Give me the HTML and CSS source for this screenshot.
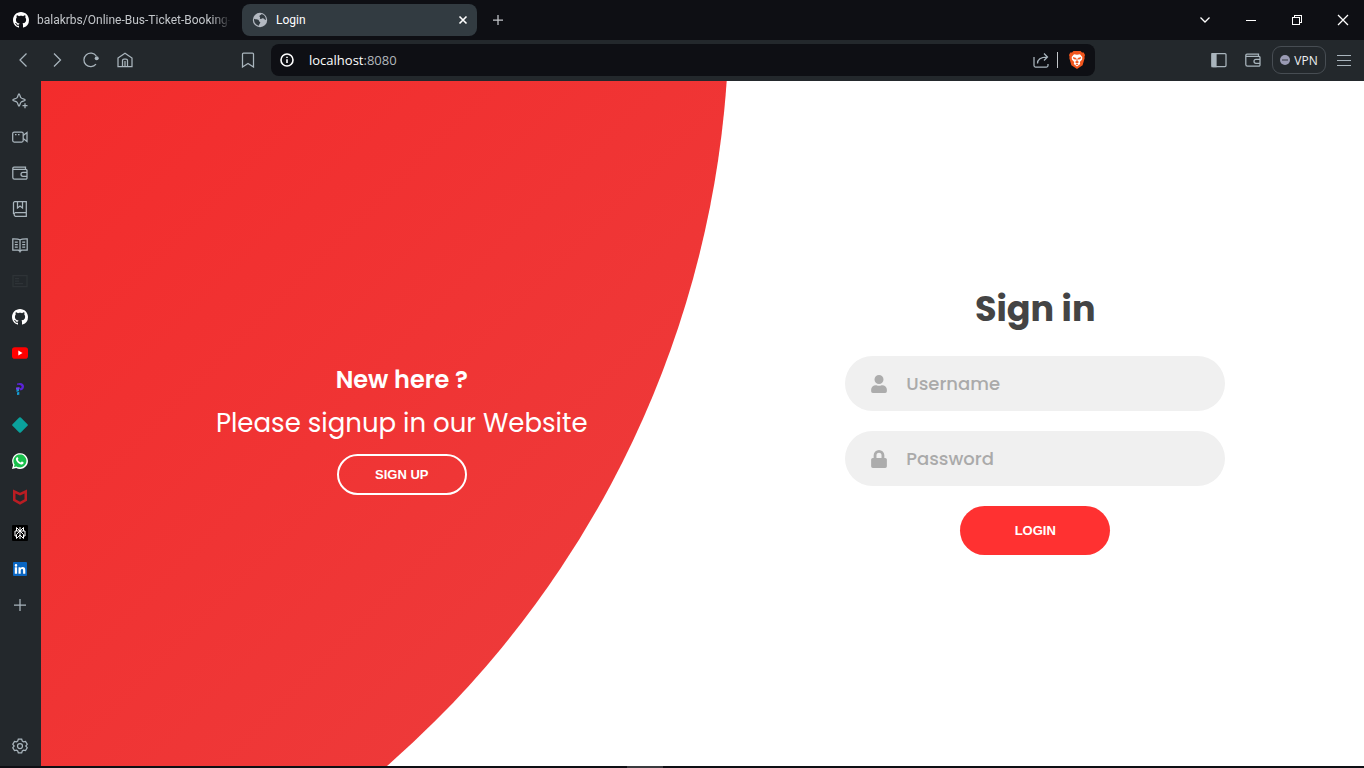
FILE: index.html
```html
<!DOCTYPE html>
<html lang="en">
<head>
<meta charset="utf-8">
<title>Login</title>
<link rel="stylesheet" href="styles.css">
</head>
<body>
<svg class="defs" aria-hidden="true">
  <symbol id="github" viewBox="0 0 16 16"><path fill="currentColor" d="M8 0C3.58 0 0 3.58 0 8c0 3.54 2.29 6.53 5.47 7.59.4.07.55-.17.55-.38 0-.19-.01-.82-.01-1.49-2.01.37-2.53-.49-2.69-.94-.09-.23-.48-.94-.82-1.13-.28-.15-.68-.52-.01-.53.63-.01 1.08.58 1.23.82.72 1.21 1.87.87 2.33.66.07-.52.28-.87.51-1.07-1.78-.2-3.64-.89-3.64-3.95 0-.87.31-1.59.82-2.15-.08-.2-.36-1.02.08-2.12 0 0 .67-.21 2.2.82.64-.18 1.32-.27 2-.27s1.36.09 2 .27c1.53-1.04 2.2-.82 2.2-.82.44 1.1.16 1.92.08 2.12.51.56.82 1.27.82 2.15 0 3.07-1.87 3.75-3.65 3.95.29.25.54.73.54 1.48 0 1.07-.01 1.93-.01 2.2 0 .21.15.46.55.38A8.01 8.01 0 0 0 16 8c0-4.42-3.58-8-8-8z"/></symbol>
  <symbol id="wallet" viewBox="0 0 16 16"><path d="M13.500 4V2H2a1.200 1.200 0 0 0 0 2.400h11.800A1.200 1.200 0 0 1 15 5.600v7.400A1.200 1.200 0 0 1 13.800 14.200H2.500A1.700 1.700 0 0 1 .8 12.500V3.200M15 7.300h-4a2 2 0 0 0 0 4h4"/></symbol>
</svg>

<header class="tabstrip">
  <div class="tab">
    <svg class="icon solid white"><use href="#github"/></svg>
    <button class="tab-title faded">balakrbs/Online-Bus-Ticket-Booking-</button>
  </div>
  <div class="tab active">
    <svg class="icon solid globe" viewBox="0 0 16 16"><circle cx="8" cy="8" r="7.200" fill="#b3b9c1"/><path fill="#323b41" d="M2 6.800c1.600 1 3 .3 4.300 1 1 .7.200 1.600 1.300 2 1 .4.800 1.200.1 1.900-.5.500-.5 1.100-.9 2.100C4 13.300 1.800 10.800 2 6.800zM9.500 2c-.2 1.200-1.900 1-2.100 1.900-.1.900 1 1 .6 1.800-.4.600-.1 1.400.9 1.300 1.200-.2 1.400-.9 2.500-.6 1 .3 1.200 1.600 2.500 1.500C14 5 12.300 2.600 9.500 2z"/></svg>
    <button class="tab-title">Login</button>
    <button class="tab-close" aria-label="Close tab"><svg class="icon" viewBox="0 0 16 16"><path d="M4.500 4.500l7 7m0-7l-7 7"/></svg></button>
  </div>
  <button class="new-tab" aria-label="New tab"><svg class="icon" viewBox="0 0 16 16"><path d="M8 3v10M3 8h10"/></svg></button>
  <div class="window-controls">
    <button aria-label="Search tabs"><svg class="icon" viewBox="0 0 16 16"><path d="M3.500 5.500L8 10l4.500-4.500"/></svg></button>
    <button aria-label="Minimize"><svg class="icon crisp" viewBox="0 0 16 16"><path d="M3 8.500h10"/></svg></button>
    <button aria-label="Restore"><svg class="icon crisp" viewBox="0 0 16 16"><path d="M3.500 5.500h7v7h-7zM5.500 5.500v-2h7v7h-2"/></svg></button>
    <button aria-label="Close"><svg class="icon" viewBox="0 0 16 16"><path d="M3 3l10 10m0-10L3 13"/></svg></button>
  </div>
</header>

<nav class="toolbar" aria-label="Browser toolbar">
  <div class="tools-left">
    <button aria-label="Back"><svg class="icon" viewBox="0 0 16 16"><path d="M11.500 1.500L5 8l6.500 6.500"/></svg></button>
    <button aria-label="Forward"><svg class="icon" viewBox="0 0 16 16"><path d="M5 1.500L11.500 8 5 14.500"/></svg></button>
    <button aria-label="Reload"><svg class="icon" viewBox="0 0 16 16"><path d="M13 12.200A6.800 6.800 0 1 1 13.300 4"/><circle cx="13.700" cy="6.300" r="2" class="dot" stroke="none"/></svg></button>
    <button aria-label="Home"><svg class="icon" viewBox="0 0 16 16"><path d="M1 6l7-4.700L15 6v8.500H1zM5.500 14.500V8.500a1.500 1.500 0 0 1 1.500-1.500h2a1.500 1.500 0 0 1 1.500 1.500v6M8 14.500V9"/></svg></button>
    <button class="bookmark" aria-label="Bookmark"><svg class="icon" viewBox="0 0 16 16"><path d="M2.500 2a1 1 0 0 1 1-1h9a1 1 0 0 1 1 1v13L8 11.500 2.500 15z"/></svg></button>
  </div>
  <div class="address">
    <svg class="icon white bold" viewBox="0 0 16 16"><circle cx="8" cy="8" r="6"/><path d="M8 7.300v3.700M8 4.700v1.400"/></svg>
    <button class="url">localhost<span class="port">:8080</span></button>
    <button class="share" aria-label="Share"><svg class="icon" viewBox="0 0 16 16"><path d="M1 5v8.500A1.500 1.500 0 0 0 2.500 15h11a1.500 1.500 0 0 0 1.500-1.500V12M4.500 11.500c0-4 2.500-6.500 9.500-6.500M11 1.500L14.500 5 11 8.500"/></svg></button>
    <button class="shield" aria-label="Brave Shields"><svg class="brave" viewBox="0 0 16 18"><path fill="#f1561d" d="M4.500 0h7l1.500 1.600 1.700-.1L16 4l-.6 2 .3 1-2.100 7.200L8 18l-5.600-3.800L.3 7l.3-1L0 4l1.300-2.500 1.700.1z"/><path fill="#fff" d="M5 3.200l3 .5 3-.5 2.300 2.800-.2 2.500L10.800 11l.4 2L8 15.500 4.800 13l.4-2L2.900 8.500 2.700 6z"/><path fill="#f1561d" d="M4 6l3.200 1-.7 1.700-2.200-1zM12 6L8.800 7l.7 1.700 2.200-1zM7.500 7.500h1V10l1.600 1L8 12.500 5.900 11l1.600-1zM6.500 13.300l1.500-.5 1.500.5-1.500 1z"/></svg></button>
  </div>
  <div class="tools-right">
    <button aria-label="Toggle sidebar"><svg class="icon" viewBox="0 0 16 16"><rect x="1" y="1.500" width="14" height="13" rx="1"/><path class="dot" d="M1 1.500h4v13H1z"/></svg></button>
    <button aria-label="Wallet"><svg class="icon"><use href="#wallet"/></svg></button>
    <button class="vpn"><svg class="vpn-dot" viewBox="0 0 10 10"><circle cx="5" cy="5" r="5" fill="#9a9bb4"/><path stroke="#30343d" d="M2 5h6"/></svg>VPN</button>
    <button aria-label="Menu"><svg class="icon crisp" viewBox="0 0 16 16"><path d="M1 3.500h14M1 8.500h14M1 13.500h14"/></svg></button>
  </div>
</nav>

<div class="workspace">
  <aside class="sidebar" aria-label="Browser sidebar">
    <button aria-label="Assistant"><svg class="icon" viewBox="0 0 16 16"><path d="M7 .8c.9 0 .9 3 2.100 4.100 1.100 1 4.100 1.100 4.100 2.100S10.200 8.100 9.100 9.100C7.900 10.200 7.900 13.200 7 13.200s-.9-3-2.100-4.100C3.800 8.100.8 8 .8 7s3-1.100 4.100-2.100C6.100 3.800 6.100.8 7 .8zM13 10.200v5M10.500 12.700h5"/></svg></button>
    <button aria-label="Talk"><svg class="icon" viewBox="0 0 16 16"><rect x=".7" y="3" width="10.500" height="10" rx="1.500"/><path d="M11.200 6.500l3.800-3v9l-3.800-3M3 5.500h1.500M6 5.500h1.500"/></svg></button>
    <button aria-label="Wallet"><svg class="icon"><use href="#wallet"/></svg></button>
    <button aria-label="Bookmarks"><svg class="icon" viewBox="0 0 16 16"><path d="M1.500 13V2A1.300 1.300 0 0 1 2.800.7h11.500v14.600H3.500a2 2 0 0 1 0-3.800h10.800M5.500.7V7L8 5l2.500 2V.7"/></svg></button>
    <button aria-label="Reading list"><svg class="icon" viewBox="0 0 16 16"><path d="M8 3C6.500 1.700 4 1.800.8 1.800v11.400h5.700L8 14.500l1.500-1.300h5.700V1.800C12 1.800 9.500 1.700 8 3zm0 0v12.500M2.800 5h3M2.800 7.500h3M2.800 10h3M10.200 5h3M10.200 7.500h3M10.200 10h3"/></svg></button>
    <button aria-label="Site panel"><svg class="icon dim" viewBox="0 0 16 16"><path d="M1 2.500h14v11H1zM3 5.500h4M3 8h4M3 10.500h8"/></svg></button>
    <button aria-label="GitHub"><svg class="icon solid white"><use href="#github"/></svg></button>
    <button aria-label="YouTube"><svg class="icon solid" viewBox="0 0 16 16"><rect y="2.300" width="16" height="11.400" rx="2.800" fill="#f00"/><path fill="#fff" d="M6.300 5.600v4.800L10.500 8z"/></svg></button>
    <button aria-label="Phind"><svg class="icon solid" viewBox="0 0 16 16"><path fill="#5b23d8" d="M5 2.500c4-1.500 7 0 7 3 0 2.500-1.500 3.500-3.500 4l-1.500-2c2 0 3-1 2.500-2.200C9 4 7 4 5 3.800z"/><path fill="#159bd2" d="M4.500 7l2.500-.8V10l-2.500 1zM5 11.500l2.300-.8v3L5 14z"/><path fill="#7d35f2" d="M4 6.500h4l-1 2H4z"/></svg></button>
    <button aria-label="Diamond"><svg class="icon solid" viewBox="0 0 16 16"><path fill="#0aa19c" d="M7.200.5a1.200 1.200 0 0 1 1.600 0l6.700 6.700a1.200 1.200 0 0 1 0 1.600l-6.700 6.700a1.200 1.200 0 0 1-1.600 0L.5 8.800a1.200 1.200 0 0 1 0-1.600z"/></svg></button>
    <button aria-label="WhatsApp"><svg class="icon solid" viewBox="0 0 16 16"><path fill="#fff" d="M0 16l1.100-4.100A7.900 7.900 0 1 1 4.200 15z"/><path fill="#19bf4c" d="M2 14l.6-2.400A6.500 6.500 0 1 1 4.500 13.400z"/><path fill="#fff" d="M5 4.300c.7-.4 1 0 1.400 1.300.1.400-.2.700-.6 1.200.7 1.400 1.600 2.100 3 2.700l.9-.9c1.600.5 2.100.8 1.900 1.300-.4 1.300-1.900 1.800-3.200 1.300C6.200 10.200 4.700 8.500 4 6.900c-.3-1 .2-2.100 1-2.600z"/></svg></button>
    <button aria-label="McAfee"><svg class="icon solid" viewBox="0 0 16 16"><path fill="#b91d23" d="M1 .5l7 3.300L15 .5v11.200l-7 4-7-4zm2.500 4v5.700L8 12.800l4.500-2.600V4.500L8 6.600z"/></svg></button>
    <button aria-label="Perplexity"><svg class="icon" viewBox="0 0 16 16"><rect width="16" height="16" rx="1" fill="#000" stroke="none"/><path stroke="#fff" stroke-width="1" d="M8 2v12M4.500 2.500L8 6l3.500-3.500V6H13v5h-1.500v2.500L8 10l-3.500 3.500V11H3V6h1.500zM4.500 6h7M8 6L4.500 9.500V11M8 6l3.500 3.500V11"/></svg></button>
    <button aria-label="LinkedIn"><svg class="icon solid" viewBox="0 0 16 16"><rect x="1" y="1" width="14" height="14" rx="1" fill="#0a66c2"/><path fill="#fff" d="M2.800 6.300h2.300v6.400H2.800zM4 3.100a1.300 1.300 0 1 1 0 2.600 1.300 1.300 0 0 1 0-2.600zM6.500 6.300h2.100v.9c.4-.7 1.100-1.100 2.100-1.100 1.900 0 2.600 1.200 2.600 3.100v3.500h-2.200V9.600c0-.9-.2-1.500-1-1.500s-1.400.6-1.400 1.500v3.100H6.500z"/></svg></button>
    <button aria-label="Add to sidebar"><svg class="icon" viewBox="0 0 16 16"><path d="M8 2v12M2 8h12"/></svg></button>
    <button class="settings" aria-label="Settings"><svg class="icon" viewBox="0 0 16 16"><path d="M6.300 1.200h3.400l.6 1.900 1.200.7 2-.4 1.700 2.900L13.800 8l1.400 1.700-1.700 2.900-2-.4-1.200.7-.6 1.900H6.300l-.6-1.900-1.200-.7-2 .4L.8 9.700 2.200 8 .8 6.300l1.700-2.900 2 .4 1.200-.7z"/><circle cx="8" cy="8" r="2.500"/></svg></button>
  </aside>

  <main class="page">
    <section class="welcome">
      <h3 class="welcome-title">New here ?</h3>
      <p class="welcome-text">Please signup in our Website</p>
      <button class="pill outline">SIGN UP</button>
    </section>
    <form class="signin">
      <h2 class="signin-title">Sign in</h2>
      <label class="field">
        <svg class="field-icon" viewBox="0 0 448 512" aria-hidden="true"><path d="M224 256a128 128 0 1 0 0-256 128 128 0 0 0 0 256zm90 32h-17a174 174 0 0 1-146 0h-17A134 134 0 0 0 0 422v42a48 48 0 0 0 48 48h352a48 48 0 0 0 48-48v-42a134 134 0 0 0-134-134z"/></svg>
        <input type="text" placeholder="Username" aria-label="Username">
      </label>
      <label class="field">
        <svg class="field-icon" viewBox="0 0 448 512" aria-hidden="true"><path d="M400 224h-24v-72a152 152 0 0 0-304 0v72H48a48 48 0 0 0-48 48v192a48 48 0 0 0 48 48h352a48 48 0 0 0 48-48V272a48 48 0 0 0-48-48zm-104 0H152v-72a72 72 0 0 1 144 0z"/></svg>
        <input type="password" placeholder="Password" aria-label="Password">
      </label>
      <button class="pill solid-red" type="submit">LOGIN</button>
    </form>
  </main>
</div>
<footer class="taskbar-edge"><span class="taskbar-handle"></span></footer>
</body>
</html>
```
FILE: styles.css
```css
* {
  box-sizing: border-box;
  margin: 0;
  padding: 0;
}

body {
  display: flex;
  flex-direction: column;
  height: 100vh;
  overflow: hidden;
  background: #23282c;
  color: #fff;
  font-family: "Open Sans", "Noto Sans", sans-serif;
  font-size: 12px;
}

button {
  display: flex;
  align-items: center;
  justify-content: center;
  border: 0;
  background: none;
  color: inherit;
  font: inherit;
  cursor: pointer;
}

.defs {
  position: absolute;
  width: 0;
  height: 0;
}

.icon {
  flex: none;
  width: 16px;
  height: 16px;
  fill: none;
  stroke: currentColor;
  stroke-width: 1.25;
}

.solid { stroke: none; }
.white { color: #fff; }
.bold { stroke-width: 1.6; }
.dim { color: #2e3337; }
.crisp {
  shape-rendering: crispEdges;
  stroke-width: 1;
}
.dot { fill: currentColor; }

/* Tab strip */

.tabstrip {
  display: flex;
  flex: none;
  align-items: center;
  height: 40px;
  background: #0e0f14;
}

.tab {
  display: flex;
  align-items: center;
  gap: 8px;
  width: 235px;
  height: 32px;
  padding: 0 6px 0 10px;
  border-radius: 8px;
}

.tab:first-child {
  width: 242px;
  padding: 0 8px 0 13px;
  color: #c3c6ca;
}

.tab.active { background: #323b41; }

.tab-title {
  font-family: Roboto, "Open Sans", sans-serif;
  white-space: nowrap;
}

.faded {
  justify-content: flex-start;
  -webkit-mask-image: linear-gradient(to right, #000 90%, transparent);
  mask-image: linear-gradient(to right, #000 90%, transparent);
}

.tab-close { margin-left: auto; }

.tab-close .icon { stroke-width: 1.6; }

.new-tab {
  width: 42px;
  color: #c3c6ca;
}

.window-controls {
  display: flex;
  margin: 0 -2px 0 auto;
}

.window-controls button {
  width: 46px;
  height: 40px;
}

/* Toolbar */

.toolbar {
  display: grid;
  flex: none;
  grid-template-columns: 265px 1fr 263px;
  gap: 6px;
  align-items: center;
  height: 41px;
  padding-bottom: 1px;
  color: #a9b5bd;
}

.tools-left,
.tools-right {
  display: flex;
  align-items: center;
}

.tools-left { padding-left: 6px; }

.tools-right {
  justify-content: flex-end;
  padding-right: 3px;
}

.tools-left button,
.tools-right button {
  width: 34px;
  height: 28px;
}

.tools-left .bookmark { margin-left: auto; }

.address {
  display: flex;
  align-items: center;
  height: 32px;
  padding: 0 10px 0 8px;
  border-radius: 8px;
  background: #0e0f14;
}

.url {
  margin: 0 auto 0 14px;
  color: #fff;
  font-size: 13px;
}

.port { color: #b3b7bc; }

.share {
  padding-right: 8px;
  border-right: 1px solid #c3c6ca;
}

.shield { padding-left: 11px; }

.brave {
  width: 16px;
  height: 18px;
}

.tools-right .vpn {
  gap: 4px;
  width: 54px;
  margin: 0 1px 0 2px;
  border: 1px solid #474d53;
  border-radius: 9px;
  color: #eef0f2;
}

.vpn-dot {
  width: 10px;
  height: 10px;
}

/* Sidebar and page */

.workspace {
  display: flex;
  flex: 1;
  min-height: 0;
}

.sidebar {
  display: flex;
  flex: none;
  flex-direction: column;
  width: 41px;
  padding: 2px 1px 2px 0;
  color: #a9b5bd;
}

.sidebar button { height: 36px; }
.sidebar .settings { margin-top: auto; }

.page {
  position: relative;
  display: grid;
  flex: 1;
  grid-template-columns: 1fr 1fr;
  gap: 8px;
  overflow: hidden;
  background: #fff;
  font-family: Poppins, Inter, "Open Sans", sans-serif;
}

/* Oversized disc whose lower right arc divides the page */
.page::before {
  content: "";
  position: absolute;
  top: -10%;
  right: 48%;
  width: 2000px;
  height: 2000px;
  border-radius: 50%;
  background: linear-gradient(-45deg, #eb4040, #ff0f0f);
  transform: translateY(-50%);
}

.welcome {
  position: relative;
  display: flex;
  flex-direction: column;
  align-items: center;
  justify-content: center;
  padding: 16px 0 0 64px;
}

.welcome-title {
  font-size: 24px;
  font-weight: 600;
  line-height: 24px;
}

.welcome-text {
  margin: 10px 0;
  font-size: 26px;
  line-height: 42px;
}

.signin {
  position: relative;
  display: flex;
  flex-direction: column;
  align-items: center;
  justify-content: center;
  padding-bottom: 10px;
}

.signin-title {
  margin-bottom: 20px;
  color: #444;
  font-size: 35px;
  font-weight: 700;
  line-height: 54px;
}

.field {
  display: flex;
  align-items: center;
  gap: 19px;
  width: 100%;
  max-width: 380px;
  height: 55px;
  margin-bottom: 20px;
  padding: 0 24px 0 26px;
  border-radius: 55px;
  background: #f0f0f0;
}

.field-icon {
  flex: none;
  width: 16px;
  height: 18px;
  fill: #acacac;
}

.field input {
  flex: 1;
  min-width: 0;
  border: 0;
  outline: 0;
  background: none;
  color: #333;
  font: inherit;
  font-size: 18px;
  font-weight: 500;
}

.field input::placeholder { color: #aaa; }

.pill {
  border-radius: 49px;
  color: #fff;
  font-family: "Liberation Sans", Arial, sans-serif;
  font-size: 13px;
  font-weight: 700;
}

.outline {
  width: 130px;
  height: 41px;
  border: 2px solid #fff;
}

.solid-red {
  width: 150px;
  height: 49px;
  background: #ff3131;
}

.taskbar-edge {
  display: flex;
  flex: none;
  justify-content: center;
  height: 2px;
  padding-right: 74px;
  background: #0e0f14;
}

.taskbar-handle {
  width: 36px;
  background: #3a3b3f;
}
```
